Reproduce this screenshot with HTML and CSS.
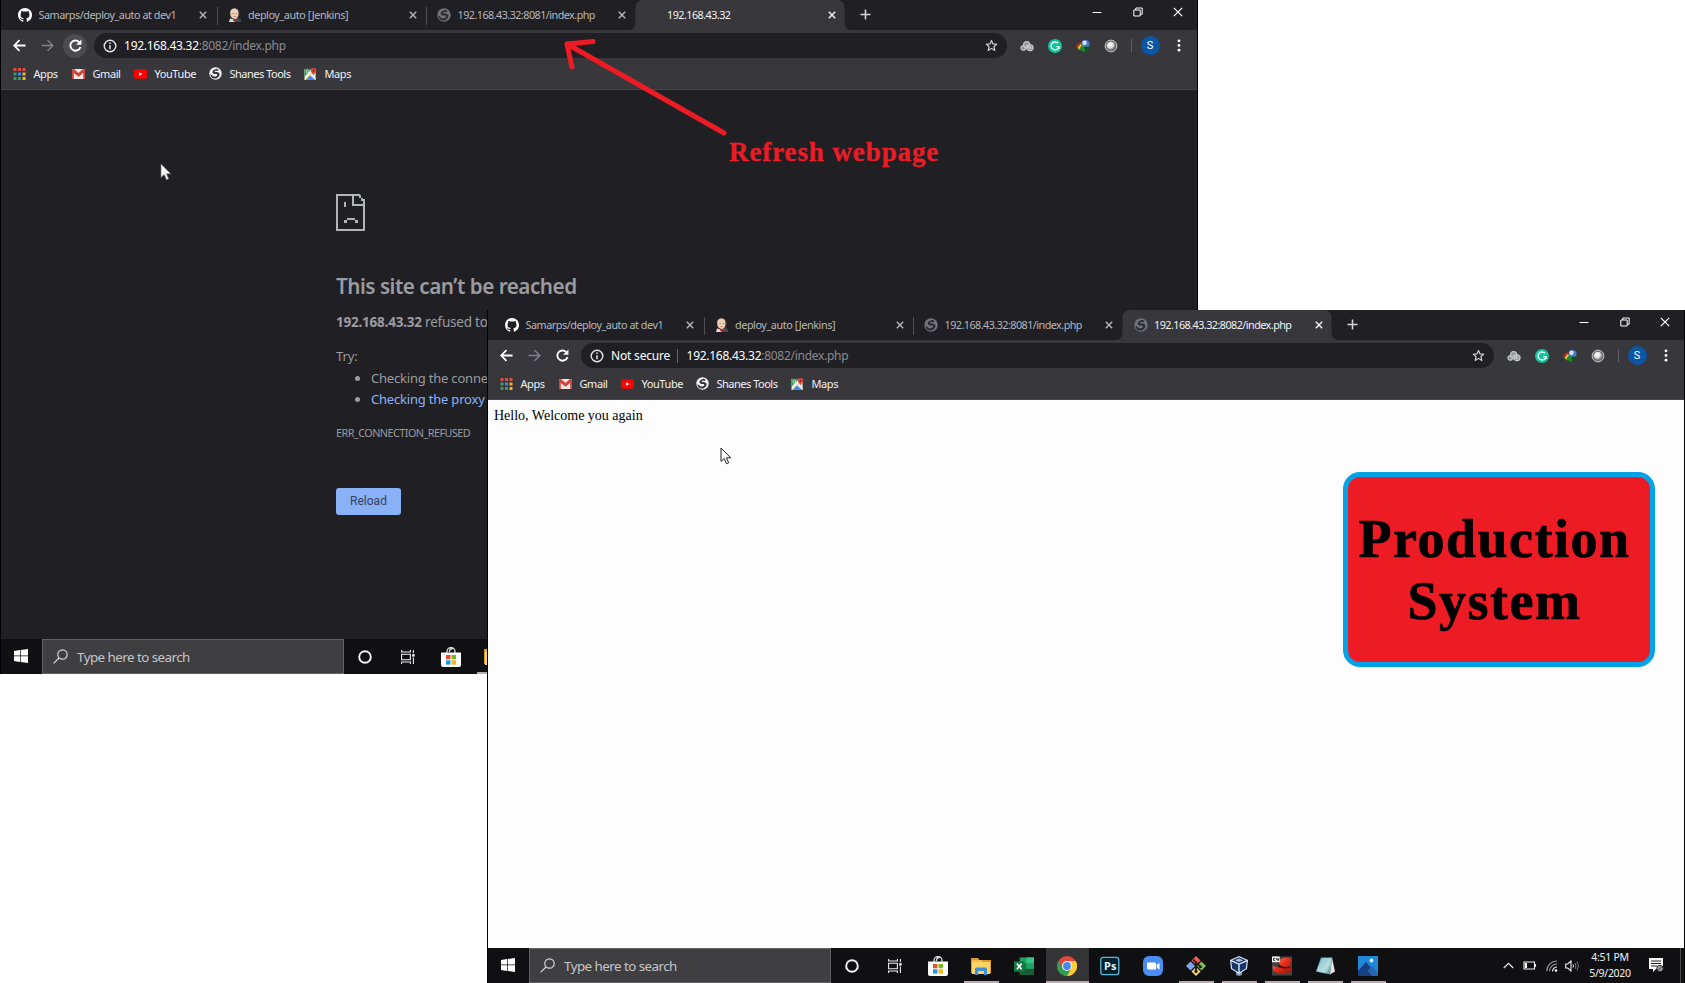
FILE: index.html
```html
<!DOCTYPE html>
<html lang="en">
<head>
<meta charset="utf-8">
<title>Production System</title>
<link rel="stylesheet" href="styles.css">
</head>
<body>
<svg class="defs" width="0" height="0">
  <defs>
    <linearGradient id="g-pad" x1="0" y1="0" x2="1" y2="1"><stop offset="0" stop-color="#4f9fae"/><stop offset=".6" stop-color="#a5d6dd"/><stop offset="1" stop-color="#3f8592"/></linearGradient>
    <radialGradient id="g-orb" cx=".4" cy=".35" r=".6"><stop offset="0" stop-color="#fff"/><stop offset=".6" stop-color="#ddd"/><stop offset="1" stop-color="#777"/></radialGradient>
    <linearGradient id="g-hat" x1="0" y1="0" x2="1" y2="1"><stop offset="0" stop-color="#ff9a80"/><stop offset=".45" stop-color="#e8301c"/><stop offset="1" stop-color="#8e1208"/></linearGradient>
  </defs>
  <symbol id="i-github" viewBox="0 0 16 16"><path fill="#fff" d="M8 0C3.58 0 0 3.58 0 8c0 3.54 2.29 6.53 5.47 7.59.4.07.55-.17.55-.38v-1.49c-2.01.37-2.53-.49-2.69-.94-.09-.23-.48-.94-.82-1.13-.28-.15-.68-.52-.01-.53.63-.01 1.08.58 1.23.82.72 1.21 1.87.87 2.33.66.07-.52.28-.87.51-1.07-1.78-.2-3.64-.89-3.64-3.95 0-.87.31-1.59.82-2.15-.08-.2-.36-1.02.08-2.12 0 0 .67-.21 2.2.82a7.6 7.6 0 0 1 4 0c1.53-1.04 2.2-.82 2.2-.82.44 1.1.16 1.92.08 2.12.51.56.82 1.27.82 2.15 0 3.07-1.87 3.75-3.65 3.95.29.25.54.73.54 1.48v2.2c0 .21.15.46.55.38A8 8 0 0 0 16 8c0-4.42-3.58-8-8-8z"/></symbol>
  <symbol id="i-jenkins" viewBox="0 0 14 14"><path fill="#3c2d2b" d="M2 7C1 1 4 0 7 0c4 0 5.500 3 5 7l-2 4H3z"/><path fill="#ecd0b6" d="M2.200 5C2.200 1.800 4.500.6 6.500.6 9.500.6 10.800 3 10.500 6c-.1 3-1.800 5-3.500 5S3 9.500 2.500 7.500z"/><path fill="#a78b7b" d="M4.500 5h1.500v.9H4.500zM7.800 5h1.500v.9H7.800zM5.500 8.300H8.500v.7h-3z"/><path fill="#dcdcdc" d="M2 10.500l4 1 1 2.500H1z"/><path fill="#33495f" d="M10 9.500l3 2V14H6z"/><path fill="#c9302c" d="M5 10.500l2 1 2.500-.8.500 2.300-3-.8-2 1z"/></symbol>
  <symbol id="i-globe" viewBox="0 0 14 14"><circle cx="7" cy="7" r="6.700" fill="currentColor"/><path fill="var(--land)" d="M8 1.800L4.500 3.500 3.500 6l2 1.500h3l.5 1.500-1.500 1.200H5L1.500 7.500q.2 4 3.500 5h3l3-2.500.5-3-2.500-1.500H6.500L6 4.500l1.500-.7 2 .5 1-1.300z"/></symbol>
  <symbol id="i-x" viewBox="0 0 8 8"><path stroke="currentColor" stroke-width="1.400" d="M.8.800l6.400 6.400M7.200.8L.8 7.200"/></symbol>
  <symbol id="i-plus" viewBox="0 0 12 12"><path stroke="#d5d6d9" stroke-width="1.700" d="M6 .5v11M.5 6h11"/></symbol>
  <symbol id="i-min" viewBox="0 0 10 10"><path stroke="#fff" d="M.5 5.500h9"/></symbol>
  <symbol id="i-restore" viewBox="0 0 10 10"><path fill="none" stroke="#fff" d="M.8 3h6.400v6H.8zM2.800 3V1h6.400v6.200h-2"/></symbol>
  <symbol id="i-wx" viewBox="0 0 10 10"><path stroke="#fff" stroke-width="1.200" d="M.8.800l8.400 8.400M9.200.8L.8 9.200"/></symbol>
  <symbol id="i-back" viewBox="0 0 14 14"><path fill="none" stroke="currentColor" stroke-width="1.900" d="M13.500 7H2M7 1.200L1.300 7 7 12.800"/></symbol>
  <symbol id="i-fwd" viewBox="0 0 14 14"><path fill="none" stroke="currentColor" stroke-width="1.500" d="M.5 7H12M7 1.200L12.700 7 7 12.800"/></symbol>
  <symbol id="i-reload" viewBox="0 0 14 14"><path fill="none" stroke="#fff" stroke-width="2" d="M12.300 8.500A5.500 5.500 0 1 1 11 3.300"/><path fill="#fff" d="M13.400.5v5.800H7.600z"/></symbol>
  <symbol id="i-info" viewBox="0 0 14 14"><circle cx="7" cy="7" r="5.800" fill="none" stroke="#e4e5e8" stroke-width="1.400"/><path stroke="#e4e5e8" stroke-width="1.500" d="M7 6.200v4M7 3.600v1.500"/></symbol>
  <symbol id="i-star" viewBox="0 0 14 14"><path fill="none" stroke="#d7d8da" stroke-width="1.200" stroke-linejoin="round" d="M7 1.500l1.600 3.800 4.100.3-3.100 2.700 1 4L7 10.100l-3.600 2.200 1-4L1.300 5.600l4.100-.3z"/></symbol>
  <symbol id="i-cloud" viewBox="0 0 15 12"><path fill="#8b8c91" d="M3 5.500Q4 1 7.500 1q3 0 4 3.500 3 .5 3 3.500T11 11.500q-2 0-3-2-2 2-4.500 1.500T1 8q0-2 2-2.500z"/><g fill="none" stroke="#c9cacd" stroke-width="1.200"><circle cx="7" cy="4.500" r="3.200"/><circle cx="3.300" cy="8.200" r="2.300"/><circle cx="10.800" cy="7.800" r="3.100"/><circle cx="10.800" cy="7.800" r="1"/><path d="M6 4.500l2.500 1.500"/></g></symbol>
  <symbol id="i-grammarly" viewBox="0 0 14 14"><circle cx="7" cy="7" r="7" fill="#15c39a"/><path fill="none" stroke="#e8fff8" stroke-width="1.400" d="M10 4.300A4 4 0 1 0 11 7.600H8.300M11 7.500v2.500"/></symbol>
  <symbol id="i-idm" viewBox="0 0 14 13"><circle cx="9.500" cy="4.500" r="4" fill="#4a78cf"/><circle cx="8.500" cy="3.300" r="2.200" fill="#d3e4fb"/><path fill="#b32c22" d="M0 7.500C.5 4 3 2.500 6 3l-.5 2L3 8.500z"/><path fill="#e2cf27" d="M1.500 8.500L4.500 4.500 6.500 6 4 11z"/><path fill="#1c8a2a" d="M3 10l2.500-4 2.500 1.200h6L9 12.800z"/><path fill="#0c5114" d="M8.500 7.300h5.500L9 12.800z"/></symbol>
  <symbol id="i-orb" viewBox="0 0 14 14"><circle cx="7" cy="7" r="5.900" fill="#6a6a6d" stroke="#c8c8ca" stroke-width="1"/><circle cx="7" cy="7" r="4.300" fill="url(#g-orb)"/></symbol>
  <symbol id="i-dots" viewBox="0 0 4 14"><g fill="#fff"><circle cx="2" cy="2" r="1.500"/><circle cx="2" cy="7" r="1.500"/><circle cx="2" cy="12" r="1.500"/></g></symbol>
  <symbol id="i-apps" viewBox="0 0 12 12"><g fill="#dd4b43"><path d="M0 0h3v3H0zM4.500 0h3v3h-3zM9 0h3v3H9z"/></g><path fill="#3c9a61" d="M0 4.500h3v3H0zM0 9h3v3H0z"/><path fill="#4285f4" d="M4.500 4.500h3v3h-3z"/><path fill="#3c9a61" d="M4.500 9h3v3h-3z"/><path fill="#f2b429" d="M9 4.500h3v3H9zM9 9h3v3H9z"/></symbol>
  <symbol id="i-gmail" viewBox="0 0 13 10"><path fill="#f1e6e4" d="M0 0h13v10H0z"/><path fill="#d0453b" d="M0 10V.5L1 0h11l1 .5V10h-1.800V4L6.500 7.700 1.800 4v6z"/><path fill="#f1e6e4" d="M2 0h9L6.500 4z"/></symbol>
  <symbol id="i-youtube" viewBox="0 0 14 10"><rect width="14" height="10" rx="2" fill="#f00"/><path fill="#fff" d="M5.600 3v4l3.500-2z"/></symbol>
  <symbol id="i-maps" viewBox="0 0 13 13"><path fill="#f2f2f2" d="M0 1h12v12H0z"/><path fill="#35a156" d="M0 1h8L1 8.500l-1 2z"/><path fill="#f7cb4d" d="M0 13L9 4l1.200 1.200L2 13z"/><path fill="#4285f4" d="M6.500 7.500L12 13H1.500z"/><path fill="#e8eaec" d="M7.500 6.500L12 11v2L6 8z"/><circle cx="3.200" cy="4" r="1.500" fill="none" stroke="#dff3e4" stroke-width=".8"/><path fill="#e0473a" d="M9.800 0A3 3 0 0 1 12.800 3c0 2-2.300 2.500-3 5-.7-2.500-3-3-3-5a3 3 0 0 1 3-3z"/><circle cx="9.800" cy="3" r="1" fill="#7b1d16"/></symbol>
  <symbol id="i-win" viewBox="0 0 14 14"><path fill="#fff" d="M0 2l6-.9v5.500H0zM6.700 1L14 0v6.600H6.700zM0 7.300h6v5.600L0 12zM6.700 7.300H14V14l-7.300-1z"/></symbol>
  <symbol id="i-search" viewBox="0 0 15 15"><g fill="none" stroke="#d6d6d6" stroke-width="1.200"><circle cx="9.500" cy="5.500" r="4.700"/><path d="M6 9L.6 14.400"/></g></symbol>
  <symbol id="i-cortana" viewBox="0 0 14 14"><circle cx="7" cy="7" r="5.800" fill="none" stroke="#f4f4f4" stroke-width="1.900"/></symbol>
  <symbol id="i-task" viewBox="0 0 14 14"><path fill="none" stroke="#eee" stroke-width="1.100" d="M.6 0v2h8.800V0M.6 14v-2h8.800v2M.6 4.300h8.800v5.400H.6zM12.400 0v3.300M12.400 7.500V14"/><path fill="#fff" d="M11.200 4.200h2.400v2.400h-2.400z"/></symbol>
  <symbol id="i-store" viewBox="0 0 20 20"><path fill="none" stroke="#ddd" stroke-width="1.300" d="M6 6V4.500a4 4 0 0 1 8 0V6M8.500 5V4a3 3 0 0 1 3-2.500"/><path fill="#fff" d="M0 5.500h20V18q0 2-2 2H2q-2 0-2-2z"/><path fill="#e8502b" d="M5 8h4.500v4.300H5z"/><path fill="#7cb51c" d="M10.500 8H15v4.300h-4.500z"/><path fill="#1b9ce8" d="M5 13.300h4.500v4.300H5z"/><path fill="#f8b713" d="M10.500 13.300H15v4.300h-4.500z"/></symbol>
  <symbol id="i-folder" viewBox="0 0 20 18"><path fill="#dd9b23" d="M0 1h7l1.500 2H20v13H0z"/><path fill="#fbd467" d="M1 5h18v12H1z"/><path fill="#f2bd4a" d="M1 3h10v2H1z"/><path fill="#3f8fd2" d="M4 18v-6q0-1.500 1.500-1.500h9q1.500 0 1.500 1.500v6h-3v-4H7v4z"/></symbol>
  <symbol id="i-excel" viewBox="0 0 21 20"><path fill="#21a366" d="M6 1h15v18H6z"/><path fill="#33c481" d="M13 1h8v6h-8z"/><path fill="#107c41" d="M6 7h7v6H6z"/><path fill="#185c37" d="M6 13h15v6H6z"/><path fill="#107c41" d="M0 5h11v11H0z"/><path stroke="#fff" stroke-width="1.700" d="M3 7.500l5 6M8 7.500l-5 6"/></symbol>
  <symbol id="i-chrome" viewBox="0 0 20 20"><circle cx="10" cy="10" r="10" fill="#e2483a"/><path fill="#2e9e53" d="M1.340 5A10 10 0 0 0 10 20l4.500-7.500L10 10l-4.500 2z"/><path fill="#fccf32" d="M18.700 5H10v5l4.300 2.500L10 20A10 10 0 0 0 18.700 5z"/><circle cx="10" cy="10" r="5" fill="#f4f4f4"/><circle cx="10" cy="10" r="3.900" fill="#4a87ee"/></symbol>
  <symbol id="i-ps" viewBox="0 0 20 18"><rect x=".8" y=".3" width="18" height="17.400" rx="2.500" fill="#04202c" stroke="#56bcdc" stroke-width="1.300"/></symbol>
  <symbol id="i-zoom" viewBox="0 0 20 20"><rect width="20" height="20" rx="6" fill="#4a8cf2"/><path fill="#fff" d="M4 6.500h7.500q1.500 0 1.500 1.500v5.500H5.500Q4 13.500 4 12zM13.700 8.800L16.500 7v6.500l-2.800-1.800z"/></symbol>
  <symbol id="i-git" viewBox="0 0 22 22"><path fill="#ee5e50" d="M11 0l5 5-5 5-5-5z"/><path fill="#7ea5f1" d="M5 6l5 5-5 5-5-5z"/><path fill="#80bb55" d="M17 6l5 5-5 5-5-5z"/><path fill="#f6d86a" d="M11 12l5 5-5 5-5-5z"/><path fill="none" stroke="#221c1c" stroke-width="2" d="M8 4l3 3v10M11 7l5 5"/><circle cx="11" cy="17" r="1.800" fill="#221c1c"/><circle cx="16" cy="12" r="1.600" fill="#221c1c"/></symbol>
  <symbol id="i-vbox" viewBox="0 0 18 20"><path fill="#7e95b3" d="M9 17l3-3v5l-3 1-3-1v-5z"/><path fill="#dce9f4" d="M9 0l9 4-1 9-8 5-8-5L0 4z"/><path fill="#173667" d="M9 1.300L16 4.300 9 7.500 2 4.300zM1.300 5.500l7 3v7.800L2.200 12.400zM16.700 5.500l-7 3v7.800l6.100-3.900z"/><path fill="#a9c2dd" d="M5 4.300L9 2.500l4 1.800-4 1.800z"/></symbol>
  <symbol id="i-hat" viewBox="0 0 21 20"><path fill="#49433f" d="M0 0h21v20H0z"/><path fill="url(#g-hat)" d="M7 5C8 1 19 0 20 3l-1 7c4 3 1 8-7 8S0 15 1 10c2 0 4 2 8 2z"/><path fill="#47120c" d="M7 8c3 3 8 4 12 2v1.500C14 14 8 12 6 10z"/><path fill="#fff" d="M0 0h8v6H0z"/><path fill="none" stroke="#222" d="M3.500 2H1.500v2h2M5 1.500V3.500h2M6.500 1.500v3"/></symbol>
  <symbol id="i-pad" viewBox="0 0 20 19"><path fill="url(#g-pad)" d="M6 1h11l-2 17-14-3z"/><path fill="#d7edf0" d="M7 1.500h9L12 16 2 14.500z" opacity=".35"/><path fill="#e6e6d8" d="M17 1l3 14-5 3z"/></symbol>
  <symbol id="i-photos" viewBox="0 0 20 20"><path fill="#1f87d7" d="M0 0h20v20H0z"/><path fill="#183f80" d="M0 15l8-9 12 14H0z"/><path fill="#2866b2" d="M9.500 14.500L14 10l6 7v3h-6z"/><circle cx="13.500" cy="4.500" r="1.900" fill="#dff0fc"/></symbol>
  <symbol id="i-chev" viewBox="0 0 11 7"><path fill="none" stroke="#e8e8e8" stroke-width="1.200" d="M.8 6l4.700-4.700L10.200 6"/></symbol>
  <symbol id="i-batt" viewBox="0 0 14 9"><path fill="none" stroke="#eee" stroke-width="1.100" d="M1 1h10.500v7H1zM12.500 3v3"/><path fill="#fff" d="M2 2h2v5H2z"/></symbol>
  <symbol id="i-wifi" viewBox="0 0 12 12"><g fill="none" stroke="#999" stroke-width="1.200"><path d="M.8 11A10 10 0 0 1 11 1"/><path d="M3.500 11.300A7.500 7.500 0 0 1 11 4"/><path stroke="#eee" d="M6.500 11.500A4.500 4.500 0 0 1 11 7"/></g><circle cx="10" cy="10.500" r="1.300" fill="#fff"/></symbol>
  <symbol id="i-vol" viewBox="0 0 14 12"><path fill="none" stroke="#eee" stroke-width="1.100" d="M.7 4h2L6 1v10L2.700 8h-2z"/><path fill="none" stroke="#eee" d="M8 4.500q1 1.500 0 3"/><path fill="none" stroke="#777" d="M10 3q2 3 0 6M12 1.500q3 4.500 0 9"/></symbol>
  <symbol id="i-note" viewBox="0 0 15 15"><path fill="#fff" d="M0 0h14v11h-7l-3 3v-3H0z"/><path stroke="#222" d="M2 3h10M2 5.500h10M2 8h6"/><circle cx="11" cy="10.500" r="3.200" fill="#aaa" stroke="#222"/><path stroke="#222" d="M9.500 12l3-3"/></symbol>
</svg>

<main class="desktop">
  <section class="window window-back">
    <div class="tabs">
      <div class="tab"><svg class="fav"><use href="#i-github"/></svg><span class="label l-sam">Samarps/deploy_auto at dev1</span><svg class="x"><use href="#i-x"/></svg></div>
      <div class="tab"><svg class="fav"><use href="#i-jenkins"/></svg><span class="label l-jen">deploy_auto [Jenkins]</span><svg class="x"><use href="#i-x"/></svg></div>
      <div class="tab last"><svg class="fav globe"><use href="#i-globe"/></svg><span class="label l-ip">192.168.43.32:8081/index.php</span><svg class="x"><use href="#i-x"/></svg></div>
      <div class="tab active"><span class="fav"></span><span class="label l-ip">192.168.43.32</span><svg class="x"><use href="#i-x"/></svg></div>
      <svg class="plus"><use href="#i-plus"/></svg>
      <div class="winbtns"><svg><use href="#i-min"/></svg><svg><use href="#i-restore"/></svg><svg><use href="#i-wx"/></svg></div>
    </div>
    <div class="toolbar">
      <span class="nav"><svg><use href="#i-back"/></svg></span><span class="nav dim"><svg><use href="#i-fwd"/></svg></span><span class="nav hover"><svg><use href="#i-reload"/></svg></span>
      <div class="address"><svg class="info"><use href="#i-info"/></svg><span class="url">192.168.43.32<span class="path">:8082/index.php</span></span><svg class="star"><use href="#i-star"/></svg></div>
      <div class="exts"><svg><use href="#i-cloud"/></svg><svg><use href="#i-grammarly"/></svg><svg><use href="#i-idm"/></svg><svg><use href="#i-orb"/></svg></div>
      <span class="rule"></span><span class="avatar">S</span><svg class="dots"><use href="#i-dots"/></svg>
    </div>
    <div class="bookmarks">
      <span class="bm b-apps"><svg><use href="#i-apps"/></svg>Apps</span><span class="bm b-gmail"><svg><use href="#i-gmail"/></svg>Gmail</span><span class="bm b-yt"><svg><use href="#i-youtube"/></svg>YouTube</span><span class="bm b-shanes"><svg class="globe-light"><use href="#i-globe"/></svg>Shanes Tools</span><span class="bm b-maps"><svg><use href="#i-maps"/></svg>Maps</span>
    </div>
    <div class="error">
      <svg class="sad" viewBox="0 0 29 37"><path fill="none" stroke="#b3b4b8" stroke-width="2" d="M24 1H1v35h27V6h-3M17 1v10h11"/><path fill="#b3b4b8" d="M23 1h2v3h-2zM25 4h2v3h-2zM8 8h2v5H8zM11 24h8v2h-8zM8 26h3v3H8zM19 26h3v3h-3z"/></svg>
      <h1>This site can’t be reached</h1>
      <p class="refused"><b>192.168.43.32</b> refused to</p>
      <p class="try">Try:</p>
      <ul><li>Checking the conne</li><li><a>Checking the proxy</a></li></ul>
      <p class="code">ERR_CONNECTION_REFUSED</p>
      <button class="reload">Reload</button>
    </div>
    <div class="taskbar">
      <span class="start"><svg><use href="#i-win"/></svg></span>
      <div class="search"><svg><use href="#i-search"/></svg><span>Type here to search</span></div>
      <span class="app sys"><svg class="s14"><use href="#i-cortana"/></svg></span><span class="app sys"><svg class="s14"><use href="#i-task"/></svg></span><span class="app store"><svg><use href="#i-store"/></svg></span><span class="app open"><svg><use href="#i-folder"/></svg></span>
    </div>
    <svg class="cursor" viewBox="0 0 12 18"><path fill="#f4f4f4" stroke="#777" stroke-width=".6" d="M1 1v13.500l3.200-3 2.300 5.300 2.200-1-2.300-5h4.300z"/></svg>
  </section>

  <svg class="arrow" viewBox="0 0 180 110"><path d="M13 14L170 103M13 14l26-2.500M13 14l5 23"/></svg>
  <div class="caption">Refresh webpage</div>

  <section class="window window-front">
    <div class="tabs">
      <div class="tab"><svg class="fav"><use href="#i-github"/></svg><span class="label l-sam">Samarps/deploy_auto at dev1</span><svg class="x"><use href="#i-x"/></svg></div>
      <div class="tab"><svg class="fav"><use href="#i-jenkins"/></svg><span class="label l-jen">deploy_auto [Jenkins]</span><svg class="x"><use href="#i-x"/></svg></div>
      <div class="tab last"><svg class="fav globe"><use href="#i-globe"/></svg><span class="label l-ip">192.168.43.32:8081/index.php</span><svg class="x"><use href="#i-x"/></svg></div>
      <div class="tab active"><svg class="fav globe"><use href="#i-globe"/></svg><span class="label l-ip">192.168.43.32:8082/index.php</span><svg class="x"><use href="#i-x"/></svg></div>
      <svg class="plus"><use href="#i-plus"/></svg>
      <div class="winbtns"><svg><use href="#i-min"/></svg><svg><use href="#i-restore"/></svg><svg><use href="#i-wx"/></svg></div>
    </div>
    <div class="toolbar">
      <span class="nav"><svg><use href="#i-back"/></svg></span><span class="nav dim"><svg><use href="#i-fwd"/></svg></span><span class="nav"><svg><use href="#i-reload"/></svg></span>
      <div class="address"><svg class="info"><use href="#i-info"/></svg><span class="insecure">Not secure</span><span class="url">192.168.43.32<span class="path">:8082/index.php</span></span><svg class="star"><use href="#i-star"/></svg></div>
      <div class="exts"><svg><use href="#i-cloud"/></svg><svg><use href="#i-grammarly"/></svg><svg><use href="#i-idm"/></svg><svg><use href="#i-orb"/></svg></div>
      <span class="rule"></span><span class="avatar">S</span><svg class="dots"><use href="#i-dots"/></svg>
    </div>
    <div class="bookmarks">
      <span class="bm b-apps"><svg><use href="#i-apps"/></svg>Apps</span><span class="bm b-gmail"><svg><use href="#i-gmail"/></svg>Gmail</span><span class="bm b-yt"><svg><use href="#i-youtube"/></svg>YouTube</span><span class="bm b-shanes"><svg class="globe-light"><use href="#i-globe"/></svg>Shanes Tools</span><span class="bm b-maps"><svg><use href="#i-maps"/></svg>Maps</span>
    </div>
    <div class="page"><span>Hello, Welcome you again</span></div>
    <div class="taskbar">
      <span class="start"><svg><use href="#i-win"/></svg></span>
      <div class="search"><svg><use href="#i-search"/></svg><span>Type here to search</span></div>
      <span class="app sys"><svg class="s14"><use href="#i-cortana"/></svg></span><span class="app sys"><svg class="s14"><use href="#i-task"/></svg></span><span class="app store"><svg><use href="#i-store"/></svg></span><span class="app open"><svg><use href="#i-folder"/></svg></span><span class="app"><svg><use href="#i-excel"/></svg></span><span class="app open current"><svg><use href="#i-chrome"/></svg></span><span class="app ps"><svg><use href="#i-ps"/></svg><b>Ps</b></span><span class="app"><svg><use href="#i-zoom"/></svg></span><span class="app open"><svg><use href="#i-git"/></svg></span><span class="app open"><svg><use href="#i-vbox"/></svg></span><span class="app open"><svg><use href="#i-hat"/></svg></span><span class="app open"><svg><use href="#i-pad"/></svg></span><span class="app open"><svg><use href="#i-photos"/></svg></span>
      <div class="tray"><svg class="chev"><use href="#i-chev"/></svg><svg class="batt"><use href="#i-batt"/></svg><svg class="wifi"><use href="#i-wifi"/></svg><svg class="vol"><use href="#i-vol"/></svg><div class="clock"><span>4:51 PM</span><span>5/9/2020</span></div><svg class="note"><use href="#i-note"/></svg><span class="peek"></span></div>
    </div>
    <svg class="cursor" viewBox="0 0 12 18"><path fill="#fff" stroke="#222" d="M1 1v13.500l3.200-3 2.300 5.300 2.200-1-2.300-5h4.300z"/></svg>
    <div class="badge"><span>Production</span><span>System</span></div>
  </section>
</main>
</body>
</html>
```
FILE: styles.css
```css
* { box-sizing: border-box; }
body { margin: 0; background: #fff; font-family: "Noto Sans", "Open Sans", sans-serif; }
svg { display: block; flex: none; }
.defs { position: absolute; }
.desktop { position: relative; width: 1685px; height: 983px; overflow: hidden; }

.window { position: absolute; display: flex; flex-direction: column; width: 1198px; border: solid #000; border-width: 0 1px; background: #202024; }
.window-back { left: 0; top: 0; height: 674px; }
.window-front { left: 487px; top: 310px; height: 673px; }

.tabs { display: flex; height: 30px; background: #202024; flex: none; }
.tab { position: relative; display: flex; align-items: center; width: 209.5px; padding-left: 17px; color: #b6b7bc; font-size: 10.8px; flex: none; }
.tab:not(.last):not(.active)::after { content: ""; position: absolute; right: -7px; top: 7px; width: 1px; height: 18px; background: #4d4d52; }
.fav { width: 14px; height: 14px; }
.label { margin-left: 6.500px; white-space: nowrap; line-height: 16px; flex: 1; }
.l-sam { letter-spacing: -.46px; }
.l-jen { letter-spacing: -.42px; }
.l-ip { letter-spacing: -.54px; }
.x { width: 8px; height: 8px; margin-right: 3.500px; }
.globe { color: #737479; --land: #2c2c31; }
.tab.active { color: #f4f4f5; background: #37373c; clip-path: path("M0 30 Q6 30 6 22 L6 8 Q6 0 14 0 L207 0 Q215 0 215 8 L215 22 Q215 30 221 30 Z"); width: 221px; margin-right: -11.500px; padding-right: 11.500px; }
.plus { width: 11px; height: 11px; margin: 9px 0 0 20.500px; }
.winbtns { display: flex; gap: 30.500px; margin: 7px 14px 0 auto; }
.winbtns svg { width: 10px; height: 10px; }

.toolbar { display: flex; align-items: center; height: 31px; padding-left: 6px; background: #37373c; flex: none; color: #fff; }
.nav { display: flex; align-items: center; justify-content: center; width: 24px; height: 24px; margin-right: 4.200px; border-radius: 50%; }
.nav svg { width: 13px; height: 13px; }
.nav.dim { color: #84848a; }
.nav.hover { background: #4b4b50; }
.address { display: flex; align-items: center; width: 913px; height: 25px; margin-left: 2px; padding: 0 9px; border-radius: 13px; background: #202024; font-size: 12px; flex: none; }
.info { width: 14px; height: 14px; }
.url { margin-left: 7.500px; letter-spacing: -.28px; }
.path { color: #8b8b91; }
.insecure { margin-left: 7.500px; padding-right: 7px; border-right: 1px solid #66666b; line-height: 14px; letter-spacing: -.2px; }
.insecure + .url { margin-left: 8.500px; }
.star { width: 13px; height: 13px; margin-left: auto; }
.exts { display: flex; gap: 14px; margin-left: 13px; }
.exts svg { width: 14px; height: 14px; }
.rule { width: 1px; height: 13px; margin-left: 13px; background: #5e5e63; }
.avatar { width: 19px; height: 19px; margin-left: 9px; border-radius: 50%; background: #0b57a4; font: 11px/19px "Roboto", sans-serif; text-align: center; }
.dots { width: 4px; height: 13px; margin-left: 17px; }

.bookmarks { display: flex; align-items: center; height: 29px; padding-left: 12px; padding-bottom: 3px; background: #37373c; border-bottom: 1px solid #46464b; color: #f2f2f3; font-size: 11px; letter-spacing: -.42px; flex: none; }
.bm { display: flex; align-items: center; gap: 7.500px; line-height: 16px; white-space: nowrap; }
.bm svg { width: 13px; height: 12px; }
.b-apps { width: 59px; } .b-gmail { width: 62px; } .b-yt { width: 75px; } .b-shanes { width: 95px; letter-spacing: -.5px; }
.bm .globe-light { height: 13px; color: #f4f4f5; --land: #37373c; }

.error { flex: 1; min-height: 0; padding: 104px 0 0 335px; color: #9b9ba0; white-space: nowrap; overflow: hidden; }
.sad { width: 29px; height: 37px; }
h1 { margin: 39px 0 0; font-size: 20.700px; line-height: 32px; font-weight: 600; letter-spacing: -.5px; }
.refused { margin: 10px 0 0; font-size: 13.500px; line-height: 20px; letter-spacing: -.22px; }
.try { margin: 14px 0 0; font-size: 13px; line-height: 20px; letter-spacing: -.1px; }
.error ul { margin: 1.500px 0 0; padding-left: 35px; font-size: 13px; line-height: 21px; letter-spacing: -.2px; }
.error a { color: #8ab4f8; }
.code { margin: 13px 0 0; font-size: 10.800px; line-height: 20px; letter-spacing: -.52px; }
.reload { display: block; width: 65px; height: 27px; margin-top: 45px; padding: 0; border: 0; border-radius: 3px; background: #8ab0f8; color: #33415c; font: 12px "Roboto", sans-serif; }

.page { flex: 1; padding: 7px 0 0 6px; background: #fdfdfd; color: #000; font: 14px/18px "Liberation Serif", serif; }

.taskbar { display: flex; height: 35px; background: #101012; flex: none; overflow: hidden; }
.start { display: flex; width: 41px; padding: 10px 0 0 13px; }
.start svg { width: 14px; height: 14px; }
.search { display: flex; align-items: center; width: 302px; padding-left: 10px; border: 1px solid #626264; background: #3f3e41; color: #c6c6c8; font-size: 13.400px; }
.search svg { width: 15px; height: 15px; }
.search span { margin-left: 9px; letter-spacing: -.55px; }
.app { position: relative; display: flex; align-items: center; justify-content: center; width: 43px; flex: none; }
.app.sys { width: 42.500px; }
.app.store { margin-right: .8px; }
.app svg { width: 20px; height: 20px; }
.app .s14 { width: 14px; height: 14px; }
.app.open::after { content: ""; position: absolute; left: 4px; right: 4px; bottom: 0; height: 2px; background: #b7adae; }
.app.current { background: #343436; }
.app.current::after { left: 0; right: 0; }
.ps b { position: absolute; color: #dff5fc; font-size: 11px; line-height: 16px; }
.tray { display: flex; align-items: center; margin-left: auto; }
.chev { width: 11px; height: 7px; }
.batt { width: 14px; height: 9px; margin-left: 9px; }
.wifi { width: 12px; height: 12px; margin-left: 9px; }
.vol { width: 14px; height: 12px; margin-left: 7px; }
.clock { display: flex; flex-direction: column; align-items: center; width: 54px; margin-left: 4px; color: #f0f0f0; font-size: 10.500px; line-height: 15.500px; letter-spacing: -.3px; }
.note { width: 15px; height: 15px; margin-left: 12px; }
.peek { width: 1px; height: 35px; margin: 0 3px 0 16px; background: #4a4a4c; }

.cursor { position: absolute; width: 12px; height: 18px; }
.window-back .cursor { left: 159px; top: 163px; }
.window-front .cursor { left: 232px; top: 137px; }
.arrow { position: absolute; left: 554px; top: 30px; width: 180px; height: 110px; fill: none; stroke: #ed1c24; stroke-width: 5; stroke-linecap: round; }
.caption { position: absolute; left: 729px; top: 136px; color: #ed1c24; font: bold 27px/32px "Liberation Serif", serif; letter-spacing: .9px; white-space: nowrap; -webkit-text-stroke: .3px #ed1c24; }
.badge { position: absolute; left: 855px; top: 162px; display: flex; flex-direction: column; align-items: center; width: 312px; height: 195px; padding: 31px 9px 0 0; border: 5px solid #00a2e8; border-radius: 17px; background: #ed1c24; color: #000; font: bold 54px/62px "Liberation Serif", serif; letter-spacing: 1.500px; -webkit-text-stroke: .7px #000; }
```
